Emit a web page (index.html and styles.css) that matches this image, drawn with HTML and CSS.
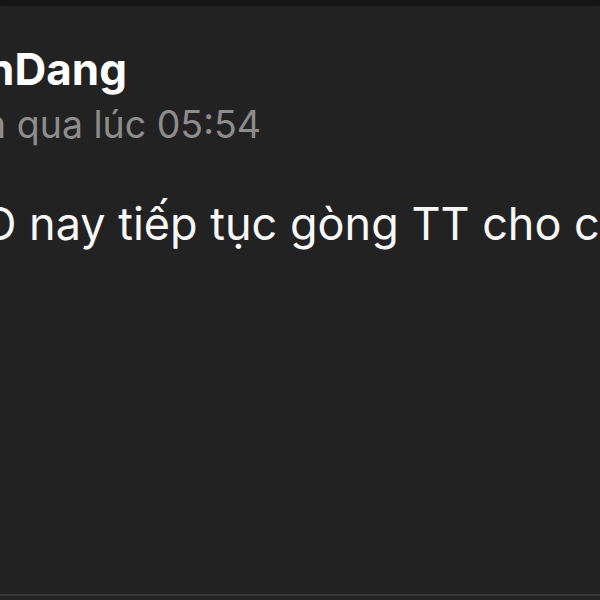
FILE: index.html
```html
<!DOCTYPE html>
<html>
<head>
    <title>Bài viết</title>
    <meta charset="UTF-8">
    <meta name="viewport" content="width=device-width, initial-scale=1.0">
    <link rel="stylesheet" href="styles.css">
</head>
<body>
    <div class="topbar"></div>
    <div class="post">
        <div class="author">TuanDang</div>
        <div class="time">Hôm qua lúc 05:54</div>
        <p class="text">VOD nay tiếp tục gòng TT cho cả tuần này</p>
    </div>
    <div class="bottom-line"></div>
    <div class="bottom"></div>
</body>
</html>
```
FILE: styles.css
```css
html, body {
    margin: 0;
    height: 100%;
}
body {
    display: flex;
    flex-direction: column;
    background-color: #222222;
    font-family: 'Inter', 'Liberation Sans', sans-serif;
    color: #ffffff;
    overflow: hidden;
}
.topbar {
    height: 5px;
    background-color: #151515;
    box-shadow: 0 1px 2px rgba(0, 0, 0, 0.3);
}
.post {
    flex: 1;
    padding-top: 38px;
    white-space: nowrap;
    overflow: hidden;
}
.author {
    margin-left: -92px;
    font-size: 44px;
    font-weight: 700;
    line-height: 52px;
}
.time {
    margin-left: -77px;
    margin-top: 7px;
    font-size: 37.5px;
    line-height: 46px;
    color: #8d8d8d;
}
.text {
    margin: 49px 0 0 -80px;
    font-size: 45px;
    line-height: 54px;
    color: #f7f7f7;
}
.bottom-line {
    height: 2px;
    background-color: #393939;
}
.bottom {
    height: 4px;
    background-color: #222222;
}
```
